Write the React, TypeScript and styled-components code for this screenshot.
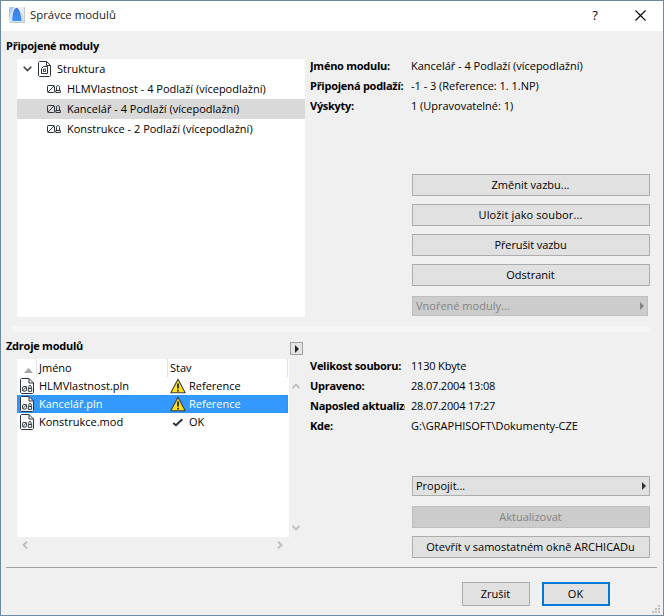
import React from 'react';
import styled, { createGlobalStyle, css } from 'styled-components';

const GlobalStyle = createGlobalStyle`
  * { box-sizing: border-box; }
  body {
    margin: 0;
    font: 11px/20px "Open Sans", "Noto Sans", sans-serif;
    color: #000;
    overflow: hidden;
  }
`;

const Dialog = styled.div`
  width: 664px;
  height: 616px;
  border: 1px solid #6d8ba8;
  background: #f0f0f0;
  display: flex;
  flex-direction: column;
  position: relative;
`;

const TitleBar = styled.header`
  height: 30px;
  flex: none;
  background: #fff;
  display: flex;
  align-items: center;
  padding: 0 17px 2px 8px;
`;

const Title = styled.span`
  flex: 1;
  margin-left: 5px;
  color: #222;
  font-size: 11.4px;
`;

const HelpMark = styled.span`
  font: 500 13px/20px "Open Sans", sans-serif;
  width: 10px;
  margin-right: 35px;
  text-align: center;
`;

const Section = styled.section<{ $height: number }>`
  height: ${(p) => p.$height}px;
  flex: none;
  display: grid;
  grid-template-columns: 309px 1fr;
`;

const LeftPane = styled.div`
  display: flex;
  flex-direction: column;
`;

const RightPane = styled.div<{ $top: number }>`
  display: flex;
  flex-direction: column;
  padding: ${(p) => p.$top}px 13px 0 0;
`;

const Heading = styled.h2<{ $height: number; $top: number }>`
  height: ${(p) => p.$height}px;
  margin: 0;
  padding: ${(p) => p.$top}px 7px 0 5px;
  display: flex;
  justify-content: space-between;
  font-size: 11px;
  font-weight: 700;
  letter-spacing: -0.25px;
`;

const FlyoutButton = styled.button`
  width: 13px;
  height: 13px;
  margin-top: 6px;
  padding: 0;
  border: 1px solid #a0a0a0;
  background: #e4e4e4;
  display: flex;
  align-items: center;
  justify-content: center;
`;

const Tree = styled.div`
  width: 288px;
  height: 258px;
  margin-left: 16px;
  background: #fff;
`;

const TreeRow = styled.div<{ $depth: number; $selected?: boolean }>`
  height: 20px;
  display: flex;
  align-items: center;
  padding-left: ${(p) => 6 + p.$depth * 24}px;
  background: ${(p) => (p.$selected ? '#d9d9d9' : 'transparent')};
  svg { flex: none; }
`;

const TreeLabel = styled.span`
  margin-left: 6px;
  white-space: nowrap;
`;

const Facts = styled.dl<{ $height: number }>`
  height: ${(p) => p.$height}px;
  margin: 0;
  display: grid;
  grid-template-columns: 95px 1fr;
  column-gap: 6px;
  grid-auto-rows: 20px;
`;

const FactName = styled.dt`
  font-weight: 700;
  letter-spacing: -0.27px;
  white-space: nowrap;
  overflow: hidden;
`;

const FactValue = styled.dd<{ $tight?: boolean }>`
  margin: 0;
  white-space: nowrap;
  letter-spacing: ${(p) => (p.$tight ? '-0.18px' : '-0.02px')};
`;

const Stack = styled.div`
  width: 238px;
  margin-left: 102px;
  display: flex;
  flex-direction: column;
  gap: 8px;
`;

const Button = styled.button<{ $track?: number }>`
  height: 22px;
  padding: 0 1px 0 0;
  border: 1px solid #adadad;
  background: #e1e1e1;
  color: #000;
  font: inherit;
  line-height: 20px;
  letter-spacing: ${(p) => p.$track ?? 0}px;
  display: flex;
  align-items: center;
  justify-content: center;
  &:disabled {
    border-color: #bfbfbf;
    background: #ccc;
    color: #838383;
  }
`;

const MenuButton = styled(Button)`
  height: 20px;
  padding: 0 3px;
  justify-content: space-between;
`;

const NestedMenuButton = styled(MenuButton)`
  width: 236px;
  margin-top: 2px;
`;

const LinkMenuButton = styled(MenuButton)`
  margin-bottom: 2px;
`;

const Splitter = styled.div`
  height: 6px;
  flex: none;
  margin: 0 14px 0 12px;
  background: #f6f6f6;
`;

const TableFrame = styled.div`
  margin-left: 16px;
  width: 288px;
  display: grid;
  grid-template-columns: 272px 16px;
  grid-template-rows: 178px 16px;
`;

const Table = styled.div`
  background: #fff;
`;

const cells = css`
  display: grid;
  grid-template-columns: 20px 131px 120px;
  width: 271px;
`;

const TableHeader = styled.div`
  ${cells}
  height: 18px;
  line-height: 18px;
`;

const HeaderCell = styled.div`
  border-right: 1px solid #e2e2e2;
  padding-left: 2px;
  svg { display: block; margin: 9px 0 0 5px; }
`;

const SourceRow = styled.div<{ $selected?: boolean }>`
  ${cells}
  height: 18px;
  line-height: 18px;
  ${(p) =>
    p.$selected &&
    css`
      background: #3399ff;
      color: #fff;
      outline: 1px dotted #c26a1c;
      outline-offset: -1px;
    `}
`;

const SourceCell = styled.div<{ $pad: number; $gap: number }>`
  display: flex;
  align-items: center;
  gap: ${(p) => p.$gap}px;
  padding-left: ${(p) => p.$pad}px;
  white-space: nowrap;
  svg { flex: none; }
`;

const VerticalScroll = styled.div`
  display: flex;
  flex-direction: column;
  align-items: center;
  justify-content: space-between;
  padding: 23px 2px 5px 0;
`;

const HorizontalScroll = styled.div`
  display: flex;
  align-items: center;
  justify-content: space-between;
  padding: 0 5px 0 4px;
`;

const Footer = styled.footer`
  flex: 1;
  margin: 0 6px 0 5px;
  border-top: 1px solid #a0a0a0;
  display: flex;
  justify-content: flex-end;
  gap: 12px;
  padding: 14px 47px 0 0;
`;

const FooterButton = styled(Button)<{ $primary?: boolean }>`
  width: 68px;
  height: 24px;
  ${(p) => p.$primary && 'border: 2px solid #0078d7;'}
`;

const SizeGrip = styled.svg`
  position: absolute;
  right: 3px;
  bottom: 2px;
`;

const AppLogo = () => (
  <svg width="16" height="16" viewBox="0 0 16 16">
    <defs>
      <linearGradient id="logoBack" x1="0" y1="0" x2="1" y2="1">
        <stop offset="0" stopColor="#ffffff" />
        <stop offset="1" stopColor="#d3d7dd" />
      </linearGradient>
      <linearGradient id="logoArc" x1="0" y1="0" x2="0" y2="1">
        <stop offset="0" stopColor="#3f74d8" />
        <stop offset="1" stopColor="#3b93ff" />
      </linearGradient>
    </defs>
    <rect width="16" height="16" fill="url(#logoBack)" />
    <path d="M0 0H5.4C3 3 1.3 7 .5 12H0Z" fill="#a9c8f6" />
    <path d="M.3 14C1.2 7 3 2.5 6.8 .8C4.8 4 4 9 3.4 14Z" fill="#d3e4fc" />
    <path d="M3.2 14C3.4 8 4.4 2 7.2 .8C10.4 1 12 7 12.6 14Z" fill="url(#logoArc)" />
    <path d="M.5 15.5H15.5V.5" fill="none" stroke="#c3c9d2" />
  </svg>
);

const CloseIcon = () => (
  <svg width="11" height="11" viewBox="0 0 11 11">
    <path d="M.5 .5L10.5 10.5M10.5 .5L.5 10.5" stroke="#000" strokeWidth="1.1" />
  </svg>
);

const Expander = () => (
  <svg width="9" height="6" viewBox="0 0 9 6">
    <path d="M.7 .8L4.5 4.6L8.3 .8" fill="none" stroke="#404040" strokeWidth="1.6" />
  </svg>
);

const ProjectIcon = styled.svg`
  margin-left: 6px;
`;

const StructureIcon = () => (
  <ProjectIcon width="13" height="16" viewBox="0 0 13 16" fill="none" stroke="#2b343c">
    <path d="M1.5 .5H8.5L12.5 4.5V14.5L11.5 15.5H1.5L.5 14.5V1.5Z" />
    <path d="M8.5 .5V4.5H12.5" />
    <path d="M3.5 7.5V12.5H9.5V5.5H5.5Z" />
    <path d="M8 8H5.5V10.5H7.5V8.5" strokeWidth=".9" />
  </ProjectIcon>
);

const ModuleIcon = () => (
  <svg width="14" height="8" viewBox="0 0 14 8" fill="none" stroke="#2b343c">
    <rect x=".5" y=".5" width="7" height="7" rx=".8" />
    <path d="M1 7L7 1" />
    <path d="M9.5 5.2V2.2C9.5 0 12.5 0 12.5 2.2V5.2M8.8 5.5H13.4V7.5H8.8Z" />
  </svg>
);

const FileIcon = () => (
  <svg width="14" height="16" viewBox="0 0 14 16" fill="none" stroke="#2b343c">
    <path d="M1.5 .5H9L13.5 5V14.5L12.5 15.5H1.5L.5 14.5V1.5Z" fill="#fff" />
    <path d="M9 .5V5H13.5" />
    <rect x="2.5" y="8.5" width="4" height="4.6" rx="1.4" />
    <path d="M2.4 13.2L6.8 8.3" strokeWidth=".9" />
    <path d="M8.8 10.5V8.6Q8.8 7.5 10 7.5T11.2 8.6V10.5M8.3 10.5H11.7V13.3H8.3Z" />
  </svg>
);

const WarningIcon = () => (
  <svg width="16" height="16" viewBox="0 0 16 16">
    <path d="M8 1.2L15.2 14.8H.8Z" fill="#ffe21a" stroke="#3a3d40" strokeWidth="1.1" strokeLinejoin="round" />
    <path d="M8 5.5V10.5M8 11.8V13.4" stroke="#22262a" strokeWidth="1.8" />
  </svg>
);

const CheckIcon = () => (
  <svg width="16" height="16" viewBox="0 0 16 16">
    <path d="M3.2 9L6 11.2L12.3 5.2" fill="none" stroke="#26303a" strokeWidth="1.9" />
  </svg>
);

const RightTriangle = ({ color }: { color: string }) => (
  <svg width="4" height="8" viewBox="0 0 4 8">
    <path d="M0 0L4 4L0 8Z" fill={color} />
  </svg>
);

const SortTriangle = () => (
  <svg width="9" height="5" viewBox="0 0 9 5">
    <path d="M4.5 0L9 5H0Z" fill="#a6a6a6" />
  </svg>
);

const turns = { up: 0, right: 90, down: 180, left: 270 };

const ScrollArrow = ({ to }: { to: keyof typeof turns }) => (
  <svg width="8" height="8" viewBox="0 0 8 8">
    <path
      d="M.6 6L4 2.6L7.4 6"
      fill="none"
      stroke="#bfbfbf"
      strokeWidth="2"
      transform={`rotate(${turns[to]} 4 4)`}
    />
  </svg>
);

const modules = [
  'HLMVlastnost - 4 Podlaží (vícepodlažní)',
  'Kancelář - 4 Podlaží (vícepodlažní)',
  'Konstrukce - 2 Podlaží (vícepodlažní)',
];

const sources = [
  { name: 'HLMVlastnost.pln', state: 'Reference', warning: true },
  { name: 'Kancelář.pln', state: 'Reference', warning: true },
  { name: 'Konstrukce.mod', state: 'OK', warning: false },
];

export default function App() {
  return (
    <>
      <GlobalStyle />
      <Dialog>
        <TitleBar>
          <AppLogo />
          <Title>Správce modulů</Title>
          <HelpMark>?</HelpMark>
          <CloseIcon />
        </TitleBar>

        <Section $height={295}>
          <LeftPane>
            <Heading $height={28} $top={5}>Připojené moduly</Heading>
            <Tree>
              <TreeRow $depth={0}>
                <Expander />
                <StructureIcon />
                <TreeLabel>Struktura</TreeLabel>
              </TreeRow>
              {modules.map((name, i) => (
                <TreeRow key={name} $depth={1} $selected={i === 1}>
                  <ModuleIcon />
                  <TreeLabel>{name}</TreeLabel>
                </TreeRow>
              ))}
            </Tree>
          </LeftPane>
          <RightPane $top={25}>
            <Facts $height={118}>
              <FactName>Jméno modulu:</FactName>
              <FactValue>Kancelář - 4 Podlaží (vícepodlažní)</FactValue>
              <FactName>Připojená podlaží:</FactName>
              <FactValue>-1 - 3 (Reference: 1. 1.NP)</FactValue>
              <FactName>Výskyty:</FactName>
              <FactValue>1 (Upravovatelné: 1)</FactValue>
            </Facts>
            <Stack>
              <Button>Změnit vazbu...</Button>
              <Button $track={0.12}>Uložit jako soubor...</Button>
              <Button $track={-0.1}>Přerušit vazbu</Button>
              <Button>Odstranit</Button>
              <NestedMenuButton disabled>
                Vnořené moduly...
                <RightTriangle color="#838383" />
              </NestedMenuButton>
            </Stack>
          </RightPane>
        </Section>

        <Splitter />

        <Section $height={235}>
          <LeftPane>
            <Heading $height={27} $top={4}>
              Zdroje modulů
              <FlyoutButton>
                <RightTriangle color="#222" />
              </FlyoutButton>
            </Heading>
            <TableFrame>
              <Table>
                <TableHeader>
                  <HeaderCell><SortTriangle /></HeaderCell>
                  <HeaderCell>Jméno</HeaderCell>
                  <HeaderCell>Stav</HeaderCell>
                </TableHeader>
                {sources.map((s, i) => (
                  <SourceRow key={s.name} $selected={i === 1}>
                    <SourceCell $pad={3} $gap={0}><FileIcon /></SourceCell>
                    <SourceCell $pad={2} $gap={0}>{s.name}</SourceCell>
                    <SourceCell $pad={2} $gap={3}>
                      {s.warning ? <WarningIcon /> : <CheckIcon />}
                      {s.state}
                    </SourceCell>
                  </SourceRow>
                ))}
              </Table>
              <VerticalScroll>
                <ScrollArrow to="up" />
                <ScrollArrow to="down" />
              </VerticalScroll>
              <HorizontalScroll>
                <ScrollArrow to="left" />
                <ScrollArrow to="right" />
              </HorizontalScroll>
            </TableFrame>
          </LeftPane>
          <RightPane $top={24}>
            <Facts $height={120}>
              <FactName>Velikost souboru:</FactName>
              <FactValue $tight>1130 Kbyte</FactValue>
              <FactName>Upraveno:</FactName>
              <FactValue $tight>28.07.2004 13:08</FactValue>
              <FactName>Naposled aktualizo</FactName>
              <FactValue $tight>28.07.2004 17:27</FactValue>
              <FactName>Kde:</FactName>
              <FactValue>G:\GRAPHISOFT\Dokumenty-CZE</FactValue>
            </Facts>
            <Stack>
              <LinkMenuButton>
                Propojit...
                <RightTriangle color="#333" />
              </LinkMenuButton>
              <Button disabled>Aktualizovat</Button>
              <Button>Otevřít v samostatném okně ARCHICADu</Button>
            </Stack>
          </RightPane>
        </Section>

        <Footer>
          <FooterButton>Zrušit</FooterButton>
          <FooterButton $primary>OK</FooterButton>
        </Footer>

        <SizeGrip width="8" height="8" viewBox="0 0 8 8" fill="#bfbfbf">
          <path d="M6 0h2v2h-2zM3 3h2v2h-2zM6 3h2v2h-2zM0 6h2v2h-2zM3 6h2v2h-2zM6 6h2v2h-2z" />
        </SizeGrip>
      </Dialog>
    </>
  );
}
